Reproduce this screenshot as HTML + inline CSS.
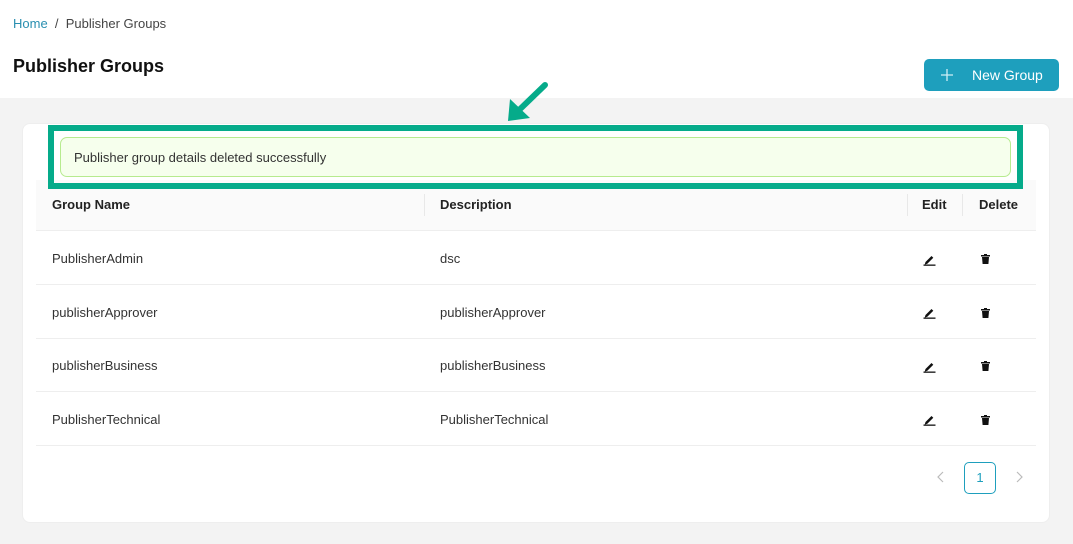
<!DOCTYPE html>
<html><head><style>
*{box-sizing:border-box;margin:0;padding:0}
body{width:1073px;height:544px;background:#f3f3f3;font-family:"Liberation Sans",sans-serif;position:relative;overflow:hidden;color:#333}
.top{position:absolute;left:0;top:0;width:1073px;height:98px;background:#fff}
.abs{position:absolute}
.bc{left:13px;top:16px;font-size:13px;color:#444}
.bc span.h{color:#2a8fb0}
h1{position:absolute;left:13px;top:56px;font-size:18px;font-weight:bold;color:#111}
.btn{left:924px;top:59px;width:135px;height:32px;background:#1e9fbd;border-radius:5px;color:#fff;font-size:14px}
.card{left:22px;top:123px;width:1028px;height:400px;background:#fff;border-radius:8px;border:1px solid #eee}
.th{left:36px;top:180px;width:1000px;height:51px;background:#fafafa;border-bottom:1px solid #eee}
.row{left:36px;width:1000px;height:54px;border-bottom:1px solid #eee;font-size:13px}
.row span,.th span{position:absolute}
.th span{font-weight:bold;font-size:13px;top:17px;color:#222}
.row span{top:20px}
.div{position:absolute;width:1px;height:22px;top:14px;background:#e8e8e8}
.hl{left:48px;top:125px;width:975px;height:64px;border:6px solid #05ab8a}
.alert{left:60px;top:137px;width:951px;height:40px;background:#f6ffed;border:1px solid #b7eb8f;border-radius:7px;font-size:13px;padding:12px 0 0 13px}
.pg{left:964px;top:462px;width:32px;height:32px;border:1px solid #1e9fbd;border-radius:5px;color:#1e9fbd;font-size:13px;text-align:center;line-height:30px}
</style></head><body>
<div class="top"></div>
<div class="abs bc"><span class="h">Home</span>&nbsp;&nbsp;/&nbsp;&nbsp;Publisher Groups</div>
<h1>Publisher Groups</h1>
<div class="abs btn"><svg class="abs" style="left:16px;top:9px" width="14" height="14"><path d="M7 1v12M1 7h12" stroke="#cfeef5" stroke-width="1.3"/></svg><span class="abs" style="left:48px;top:8px">New Group</span></div>
<div class="abs card"></div>
<div class="abs th"><span style="left:16px">Group Name</span><div class="div" style="left:388px"></div><span style="left:404px">Description</span><div class="div" style="left:871px"></div><span style="left:886px">Edit</span><div class="div" style="left:926px"></div><span style="left:943px">Delete</span></div>
<div class="abs row" style="top:231px"><span style="left:16px">PublisherAdmin</span><span style="left:404px">dsc</span></div>
<div class="abs row" style="top:285px"><span style="left:16px">publisherApprover</span><span style="left:404px">publisherApprover</span></div>
<div class="abs row" style="top:338px"><span style="left:16px">publisherBusiness</span><span style="left:404px">publisherBusiness</span></div>
<div class="abs row" style="top:392px"><span style="left:16px">PublisherTechnical</span><span style="left:404px">PublisherTechnical</span></div>
<svg class="abs" style="left:0;top:0" width="1073" height="544">
<g fill="#111">
<g id="e"><path d="M925.5 262 l6-6 1.8 1.8-6 6-2.6.8z"/><rect x="923.5" y="264.5" width="12" height="1.3"/></g>
<use href="#e" y="53"/><use href="#e" y="107"/><use href="#e" y="160"/>
<g id="t"><rect x="981" y="255" width="9" height="1.5"/><rect x="984" y="254" width="3" height="1.5"/><path d="M982 257h7l-.6 7h-5.8z"/></g>
<use href="#t" y="54"/><use href="#t" y="107"/><use href="#t" y="161"/>
</g>
<path d="M545 85 L516 113" stroke="#05ab8a" stroke-width="6" stroke-linecap="round"/>
<path d="M508 121 L510 99 L530 118z" fill="#05ab8a"/>
<path d="M943 472l-5 5 5 5M1017 472l5 5-5 5" stroke="#bbb" stroke-width="1.2" fill="none"/>
</svg>
<div class="abs hl"></div>
<div class="abs alert">Publisher group details deleted successfully</div>
<div class="abs pg">1</div>
</body></html>
